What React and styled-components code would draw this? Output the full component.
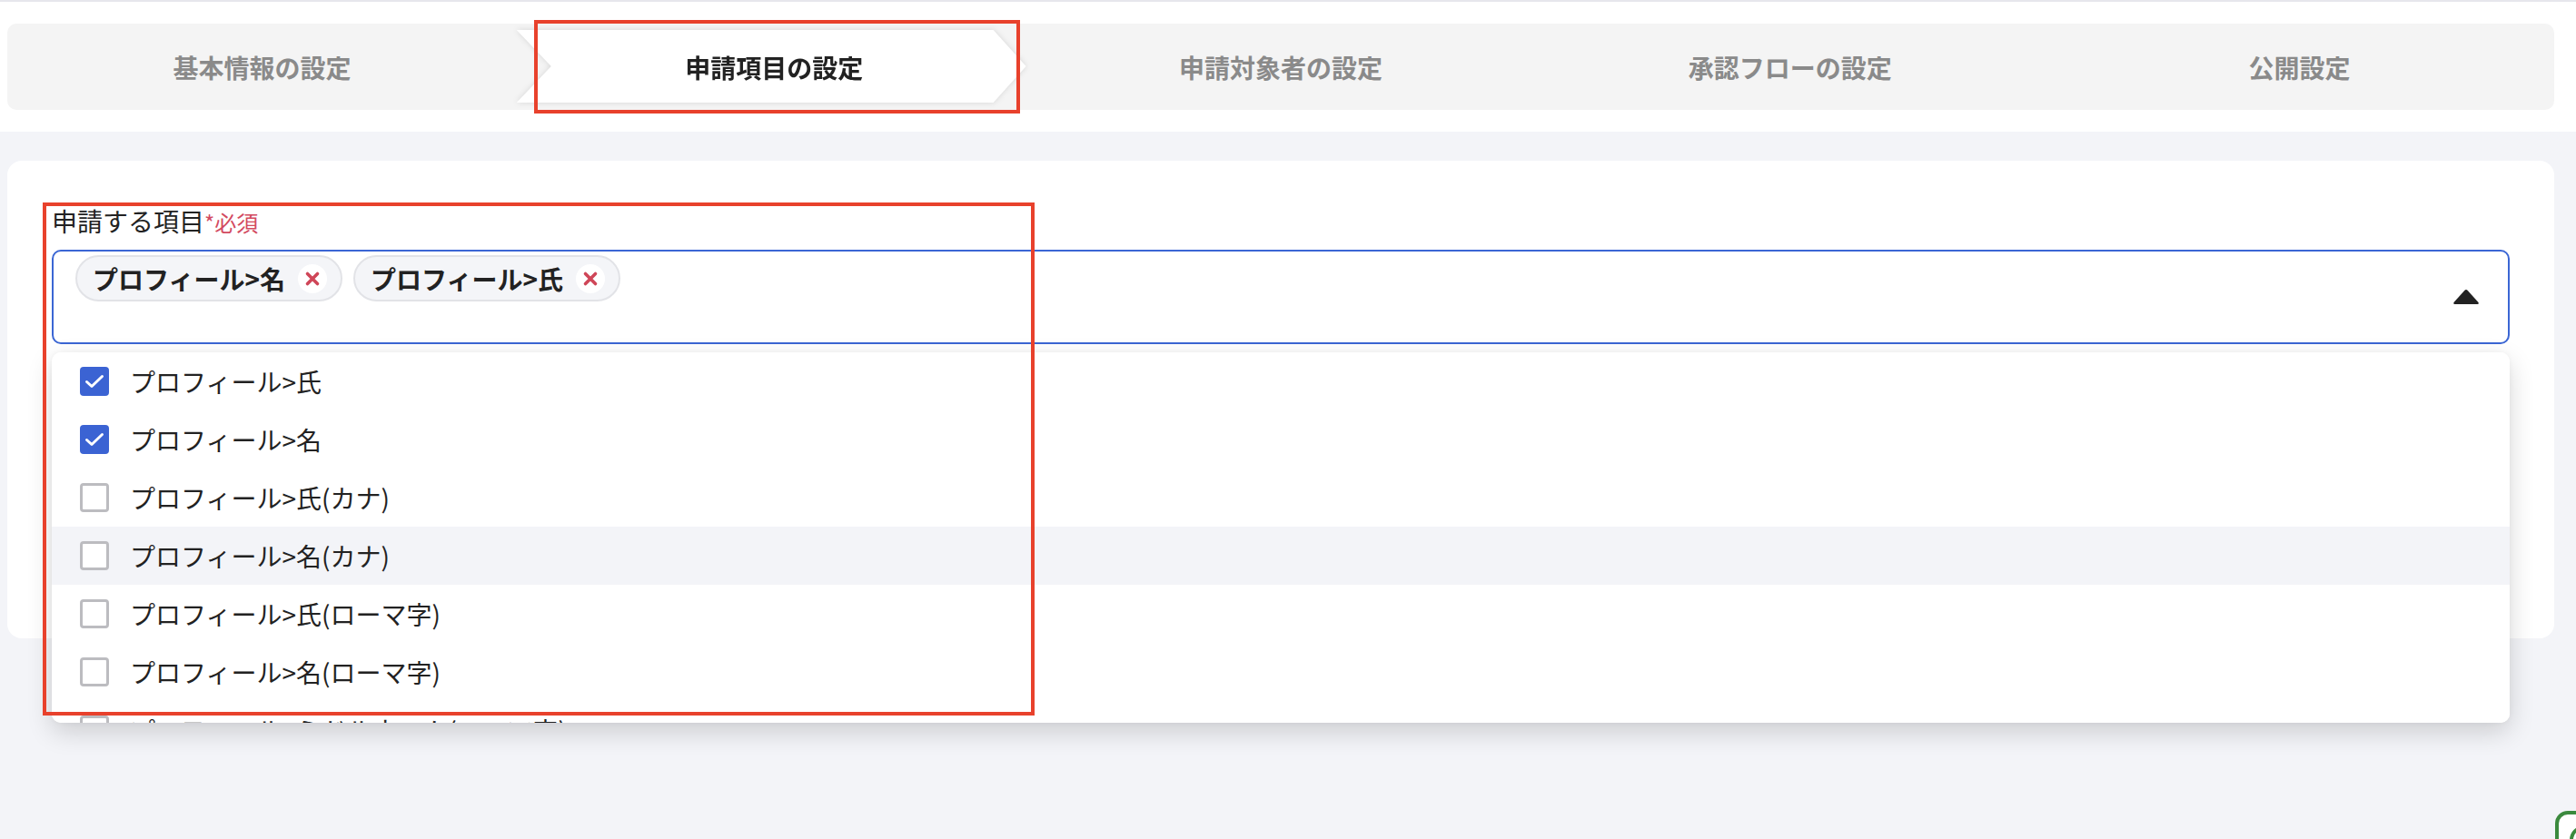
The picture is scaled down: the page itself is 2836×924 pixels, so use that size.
import React from "react";
import styled, { createGlobalStyle } from "styled-components";

const GlobalStyle = createGlobalStyle`
  html, body {
    margin: 0;
    padding: 0;
    background: #f3f4f8;
    font-family: "Noto Sans CJK JP", "Noto Sans", sans-serif;
    color: #222;
  }
  * { box-sizing: border-box; }
`;

const Page = styled.div`
  position: relative;
  min-height: 924px;
`;

const Header = styled.div`
  background: #fff;
  border-top: 2px solid #e6e6ec;
  padding: 24px 24px 24px 8px;
`;

const Stepper = styled.div`
  display: grid;
  grid-template-columns: repeat(5, 1fr);
  height: 95px;
  background: #f4f4f4;
  border-radius: 10px;
`;

const Step = styled.div`
  position: relative;
  display: flex;
  align-items: center;
  justify-content: center;
  font-size: 28px;
  font-weight: 700;
  color: ${(p) => (p.$active ? "#222" : "#8a8a8a")};
  filter: ${(p) => (p.$active ? "drop-shadow(0 0 3px rgba(0,0,0,0.12))" : "none")};
`;

const StepShape = styled.div`
  position: absolute;
  top: 7px;
  bottom: 8px;
  left: 0;
  right: 0;
  background: #fff;
  clip-path: polygon(0 0, calc(100% - 36px) 0, 100% 50%, calc(100% - 36px) 100%, 0 100%, 38px 50%);
`;

const StepLabel = styled.span`
  position: relative;
  padding-left: ${(p) => (p.$active ? "6px" : "0")};
`;

const Card = styled.div`
  margin: 32px 24px 0 8px;
  background: #fff;
  border-radius: 16px;
  min-height: 526px;
  padding: 46px 49px;
`;

const Label = styled.div`
  font-size: 28px;
  line-height: 40px;
  margin-bottom: 10px;
  color: #222;
`;

const Required = styled.span`
  font-size: 24px;
  color: #d34a60;
`;

const SelectWrap = styled.div`
  position: relative;
`;

const SelectBox = styled.div`
  display: flex;
  align-items: flex-start;
  justify-content: space-between;
  height: 104px;
  border: 2px solid #3b66d4;
  border-radius: 10px;
  padding: 4px 31px 0 24px;
`;

const Chips = styled.div`
  display: flex;
  gap: 12px;
`;

const Chip = styled.div`
  display: flex;
  align-items: center;
  gap: 14px;
  height: 51px;
  padding: 0 15px 0 17px;
  background: #f4f5f8;
  border: 2px solid #e2e3e7;
  border-radius: 26px;
  font-size: 28px;
  font-weight: 700;
  color: #222;
`;

const ChipClose = styled.span`
  display: flex;
  align-items: center;
  justify-content: center;
  width: 32px;
  height: 32px;
  border-radius: 50%;
  background: #fff;
`;

const Caret = styled.svg`
  align-self: center;
  margin-top: -4px;
`;

const Dropdown = styled.div`
  position: absolute;
  top: 113px;
  left: 0;
  right: 0;
  height: 408px;
  overflow: hidden;
  background: #fff;
  border-radius: 10px;
  box-shadow: 0 10px 28px rgba(0, 0, 0, 0.16), 0 0 6px rgba(0, 0, 0, 0.04);
  z-index: 2;
`;

const Option = styled.div`
  display: flex;
  align-items: center;
  gap: 23px;
  height: 64px;
  padding-left: 31px;
  font-size: 28px;
  color: #222;
  background: ${(p) => (p.$hover ? "#f3f4f8" : "#fff")};
`;

const Check = styled.span`
  display: flex;
  align-items: center;
  justify-content: center;
  width: 32px;
  height: 32px;
  border-radius: 4px;
  background: ${(p) => (p.$checked ? "#3b63d3" : "#fff")};
  border: ${(p) => (p.$checked ? "none" : "3px solid #bcbcc0")};
`;

const Annotation = styled.div`
  position: absolute;
  border: 4px solid #e8412c;
  pointer-events: none;
  z-index: 5;
`;

const FloatButton = styled.div`
  position: fixed;
  left: 2813px;
  top: 893px;
  width: 64px;
  height: 64px;
  border: 4px solid #3b8a3e;
  border-radius: 14px;
  background: #fff;
  display: flex;
  align-items: center;
  justify-content: center;
`;

const steps = ["基本情報の設定", "申請項目の設定", "申請対象者の設定", "承認フローの設定", "公開設定"];

const options = [
  { label: "プロフィール>氏", checked: true },
  { label: "プロフィール>名", checked: true },
  { label: "プロフィール>氏(カナ)" },
  { label: "プロフィール>名(カナ)", hover: true },
  { label: "プロフィール>氏(ローマ字)" },
  { label: "プロフィール>名(ローマ字)" },
  { label: "プロフィール>ミドルネーム(ローマ字)" },
];

const CloseIcon = () => (
  <svg width="18" height="18" viewBox="0 0 18 18">
    <path d="M3.5 3.5L14.5 14.5M14.5 3.5L3.5 14.5" stroke="#cf4658" strokeWidth="3.6" strokeLinecap="round" />
  </svg>
);

const CheckIcon = () => (
  <svg width="26" height="26" viewBox="0 0 26 26">
    <path d="M4.5 13.5L10 18.5L21.5 7.5" fill="none" stroke="#fff" strokeWidth="3" strokeLinecap="round" strokeLinejoin="round" />
  </svg>
);

export default function App() {
  return (
    <Page>
      <GlobalStyle />
      <Header>
        <Stepper>
          {steps.map((s, i) => (
            <Step key={s} $active={i === 1}>
              {i === 1 && <StepShape />}
              <StepLabel $active={i === 1}>{s}</StepLabel>
            </Step>
          ))}
        </Stepper>
      </Header>

      <Card>
        <Label>
          申請する項目<Required>*必須</Required>
        </Label>
        <SelectWrap>
          <SelectBox>
            <Chips>
              <Chip>
                プロフィール&gt;名
                <ChipClose><CloseIcon /></ChipClose>
              </Chip>
              <Chip>
                プロフィール&gt;氏
                <ChipClose><CloseIcon /></ChipClose>
              </Chip>
            </Chips>
            <Caret width="30" height="18" viewBox="0 0 30 18">
              <path d="M13 2.2Q15 0 17 2.2L28.5 15Q29.5 17 27 17H3Q0.5 17 1.5 15Z" fill="#222" />
            </Caret>
          </SelectBox>
          <Dropdown>
            {options.map((o) => (
              <Option key={o.label} $hover={o.hover}>
                <Check $checked={o.checked}>{o.checked && <CheckIcon />}</Check>
                {o.label}
              </Option>
            ))}
          </Dropdown>
        </SelectWrap>
      </Card>

      <Annotation style={{ left: 588, top: 22, width: 535, height: 103 }} />
      <Annotation style={{ left: 47, top: 223, width: 1092, height: 565 }} />

      <FloatButton>
        <svg width="40" height="40" viewBox="0 0 40 40">
          <circle cx="20" cy="20" r="14" fill="none" stroke="#3b8a3e" strokeWidth="4" />
        </svg>
      </FloatButton>
    </Page>
  );
}
